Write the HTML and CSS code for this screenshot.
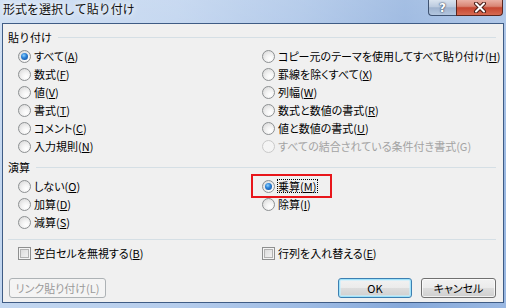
FILE: index.html
```html
<!DOCTYPE html>
<html lang="ja">
<head>
<meta charset="utf-8">
<title>形式を選択して貼り付け</title>
<link rel="stylesheet" href="styles.css">
</head>
<body>
<div class="window">
  <div class="titlebar">
    <span class="title">形式を選択して貼り付け</span>
    <div class="caption-buttons">
      <span class="cap help">?</span>
      <span class="cap close">
        <svg width="14" height="11" viewBox="0 0 14 11">
          <path d="M3 1.5 L11 9.5 M11 1.5 L3 9.5" stroke="#4a1d16" stroke-width="4" stroke-linecap="round" fill="none"/>
          <path d="M3 1.5 L11 9.5 M11 1.5 L3 9.5" stroke="#ffffff" stroke-width="2" stroke-linecap="round" fill="none"/>
        </svg>
      </span>
    </div>
  </div>
  <div class="client">
    <div class="group-head"><span>貼り付け</span></div>
    <div class="options">
      <div class="col">
        <div class="opt"><span class="radio checked"></span><span>すべて(<u>A</u>)</span></div>
        <div class="opt"><span class="radio"></span><span>数式(<u>F</u>)</span></div>
        <div class="opt"><span class="radio"></span><span>値(<u>V</u>)</span></div>
        <div class="opt"><span class="radio"></span><span>書式(<u>T</u>)</span></div>
        <div class="opt"><span class="radio"></span><span>コメント(<u>C</u>)</span></div>
        <div class="opt"><span class="radio"></span><span>入力規則(<u>N</u>)</span></div>
      </div>
      <div class="col">
        <div class="opt"><span class="radio"></span><span>コピー元のテーマを使用してすべて貼り付け(<u>H</u>)</span></div>
        <div class="opt"><span class="radio"></span><span>罫線を除くすべて(<u>X</u>)</span></div>
        <div class="opt"><span class="radio"></span><span>列幅(<u>W</u>)</span></div>
        <div class="opt"><span class="radio"></span><span>数式と数値の書式(<u>R</u>)</span></div>
        <div class="opt"><span class="radio"></span><span>値と数値の書式(<u>U</u>)</span></div>
        <div class="opt disabled"><span class="radio"></span><span>すべての結合されている条件付き書式(G)</span></div>
      </div>
    </div>
    <div class="group-head ops-head"><span>演算</span></div>
    <div class="options ops">
      <div class="col">
        <div class="opt"><span class="radio"></span><span>しない(<u>O</u>)</span></div>
        <div class="opt"><span class="radio"></span><span>加算(<u>D</u>)</span></div>
        <div class="opt"><span class="radio"></span><span>減算(<u>S</u>)</span></div>
      </div>
      <div class="col">
        <div class="opt marked"><span class="radio checked"></span><span class="focus">乗算(<u>M</u>)</span><span class="highlight"></span></div>
        <div class="opt"><span class="radio"></span><span>除算(<u>I</u>)</span></div>
      </div>
    </div>
    <div class="sep"></div>
    <div class="options checks">
      <div class="opt"><span class="checkbox"></span><span>空白セルを無視する(<u>B</u>)</span></div>
      <div class="opt"><span class="checkbox"></span><span>行列を入れ替える(<u>E</u>)</span></div>
    </div>
    <div class="buttons">
      <span class="btn link-btn">リンク貼り付け(L)</span>
      <span class="btn ok-btn">OK</span>
      <span class="btn cancel-btn">キャンセル</span>
    </div>
  </div>
</div>
</body>
</html>
```
FILE: styles.css
```css
html, body {
  margin: 0;
  padding: 0;
}
body {
  width: 506px;
  height: 308px;
  overflow: hidden;
  font-family: "Noto Sans CJK JP", "Noto Sans", sans-serif;
  font-size: 11px;
  color: #000;
}
.window {
  width: 506px;
  height: 308px;
  box-sizing: border-box;
  padding: 0 2px 5px 2px;
  display: flex;
  flex-direction: column;
  background:
    linear-gradient(180deg, rgba(255,255,255,0.25) 0%, rgba(255,255,255,0) 60%),
    linear-gradient(90deg, #c3d7f0 0%, #b6cdec 35%, #9fbce4 60%, #86a9da 80%, #9ab8e2 100%);
}
.titlebar {
  height: 23px;
  display: flex;
  align-items: flex-start;
  padding-right: 1px;
  flex: none;
}
.title {
  margin: 1px 0 0 1px;
  font-size: 12px;
  line-height: 16px;
  color: #111;
  text-shadow: 0 0 5px rgba(255,255,255,0.95), 0 0 9px rgba(255,255,255,0.8);
  font-feature-settings: "palt" 0;
}
.caption-buttons {
  margin-left: auto;
  display: flex;
}
.cap {
  height: 16px;
  box-sizing: border-box;
  display: flex;
  align-items: center;
  justify-content: center;
}
.help {
  width: 28px;
  border: 1px solid #3f5372;
  border-top: none;
  border-right: none;
  border-bottom-left-radius: 4px;
  background: linear-gradient(180deg, #d9e3ef 0%, #bccbdf 45%, #9fb3cf 52%, #b3c6df 100%);
  color: #fff;
  font-family: "DejaVu Sans", sans-serif;
  font-weight: bold;
  font-size: 12px;
  line-height: 14px;
  text-shadow: 0 0 1px #2c3e58, 0 0 2px #2c3e58;
}
.close {
  width: 47px;
  border: 1px solid #5b261e;
  border-top: none;
  border-bottom-right-radius: 4px;
  background: linear-gradient(180deg, #eab0a4 0%, #d98574 42%, #c64630 52%, #d66a52 100%);
}
.client {
  flex: 1;
  border: 1px solid #3f5c85;
  background: #f0f0f0;
  padding: 5px 7px 4px 5px;
  display: flex;
  flex-direction: column;
}
.group-head {
  display: flex;
  align-items: center;
  height: 16px;
  line-height: 16px;
  gap: 6px;
  white-space: nowrap;
}
.group-head::after {
  content: "";
  flex: 1;
  border-top: 1px solid #d5dfe5;
}
.ops-head {
  margin-top: 4px;
}
.options {
  display: grid;
  grid-template-columns: 244px 1fr;
  margin: 2px 0 0 10px;
}
.col {
  display: flex;
  flex-direction: column;
}
.opt {
  display: flex;
  align-items: center;
  height: 18px;
  gap: 3px;
  white-space: nowrap;
  font-feature-settings: "palt" 1;
}
u {
  text-decoration-thickness: 1px;
  text-underline-offset: 1px;
}
.radio {
  width: 13px;
  height: 13px;
  box-sizing: border-box;
  border-radius: 50%;
  border: 1px solid #8d9092;
  background: radial-gradient(circle at 65% 70%, #ffffff 0%, #f4f4f4 35%, #d4d4d4 100%);
  display: flex;
  align-items: center;
  justify-content: center;
  flex: none;
}
.radio.checked::after {
  content: "";
  width: 7px;
  height: 7px;
  border-radius: 50%;
  background: radial-gradient(circle at 40% 35%, #8fd3ff 0%, #2c82d8 40%, #0c4795 100%);
}
.disabled {
  color: #a3a3a3;
}
.disabled .radio {
  border-color: #c9c9c9;
  background: #f4f4f4;
}
.marked {
  position: relative;
}
.focus {
  border: 1px dotted #000;
  margin-left: -1px;
  padding: 0 1px 0 0;
  line-height: 12px;
}
.highlight {
  position: absolute;
  left: -11px;
  top: -3px;
  width: 81px;
  height: 24px;
  box-sizing: border-box;
  border: 2px solid #e8161b;
}
.sep {
  border-top: 1px solid #d5dfe5;
  margin-top: 8px;
}
.checks {
  margin-top: 4px;
}
.checkbox {
  width: 13px;
  height: 13px;
  box-sizing: border-box;
  border: 1px solid #8e8f8f;
  background: #f4f4f4;
  box-shadow: inset 0 0 0 1px #f4f4f4, inset 0 0 0 2px #b2b2b2;
  background-image: linear-gradient(135deg, #d6d6d6 0%, #f7f7f7 100%);
  flex: none;
}
.buttons {
  display: flex;
  margin-top: 16px;
  height: 20px;
}
.btn {
  box-sizing: border-box;
  height: 20px;
  display: flex;
  align-items: center;
  justify-content: center;
  border: 1px solid #707070;
  border-radius: 3px;
  background: linear-gradient(180deg, #f2f2f2 0%, #ebebeb 50%, #dddddd 51%, #cfcfcf 100%);
  box-shadow: inset 0 0 0 1px rgba(255,255,255,0.7);
  white-space: nowrap;
  font-feature-settings: "palt" 1;
}
.link-btn {
  width: 97px;
  margin-left: 1px;
  border-color: #adb2b5;
  background: #f4f4f4;
  box-shadow: none;
  color: #9a9a9a;
}
.ok-btn {
  width: 74px;
  margin-left: auto;
  border-color: #3c7fb1;
  box-shadow: inset 0 0 0 1px #9fe3fb, inset 0 0 0 2px rgba(200,240,255,0.6);
}
.cancel-btn {
  width: 75px;
  margin-left: 9px;
}
```
